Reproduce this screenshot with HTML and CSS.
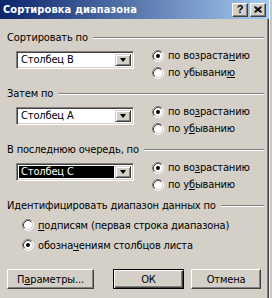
FILE: index.html
```html
<!DOCTYPE html>
<html>
<head>
<meta charset="utf-8">
<link rel="stylesheet" href="styles.css">
</head>
<body>
<div class="screen">
  <div class="dialog">
    <div class="titlebar">
      <span class="title">Сортировка диапазона</span>
      <div class="tbtns">
        <span class="tbtn help">?</span>
        <span class="tbtn close"><svg width="8" height="7" viewBox="0 0 8 7"><path d="M0.5 0.5 L7.5 6.5 M1.5 0.5 L7.5 5.5 M0.5 1.5 L6.5 6.5 M7.5 0.5 L0.5 6.5 M6.5 0.5 L0.5 5.5 M7.5 1.5 L1.5 6.5" stroke="#000" stroke-width="1" fill="none"/></svg></span>
      </div>
    </div>
    <div class="client">
      <section class="group">
        <div class="ghead"><span>Сортировать по</span><i class="rule"></i></div>
        <div class="gbody">
          <div class="combo"><span class="val">Столбец B</span><span class="drop"><i class="tri"></i></span></div>
          <div class="radios">
            <div class="radio"><svg class="rb on" width="12" height="12" viewBox="0 0 12 12"><circle cx="6" cy="6" r="5" fill="#fff"/><path d="M2.11 9.89A5.5 5.5 0 0 1 9.89 2.11" stroke="#808080" fill="none"/><path d="M9.89 2.11A5.5 5.5 0 0 1 2.11 9.89" stroke="#fff" fill="none"/><path d="M2.82 9.18A4.5 4.5 0 0 1 9.18 2.82" stroke="#404040" fill="none"/><path d="M9.18 2.82A4.5 4.5 0 0 1 2.82 9.18" stroke="#d4d0c8" fill="none"/><circle class="dot" cx="6" cy="6" r="2" fill="#000"/></svg><span>по возраста<u>н</u>ию</span></div>
            <div class="radio"><svg class="rb" width="12" height="12" viewBox="0 0 12 12"><circle cx="6" cy="6" r="5" fill="#fff"/><path d="M2.11 9.89A5.5 5.5 0 0 1 9.89 2.11" stroke="#808080" fill="none"/><path d="M9.89 2.11A5.5 5.5 0 0 1 2.11 9.89" stroke="#fff" fill="none"/><path d="M2.82 9.18A4.5 4.5 0 0 1 9.18 2.82" stroke="#404040" fill="none"/><path d="M9.18 2.82A4.5 4.5 0 0 1 2.82 9.18" stroke="#d4d0c8" fill="none"/></svg><span>по убывани<u>ю</u></span></div>
          </div>
        </div>
      </section>
      <section class="group">
        <div class="ghead"><span>Затем по</span><i class="rule"></i></div>
        <div class="gbody">
          <div class="combo"><span class="val">Столбец А</span><span class="drop"><i class="tri"></i></span></div>
          <div class="radios">
            <div class="radio"><svg class="rb on" width="12" height="12" viewBox="0 0 12 12"><circle cx="6" cy="6" r="5" fill="#fff"/><path d="M2.11 9.89A5.5 5.5 0 0 1 9.89 2.11" stroke="#808080" fill="none"/><path d="M9.89 2.11A5.5 5.5 0 0 1 2.11 9.89" stroke="#fff" fill="none"/><path d="M2.82 9.18A4.5 4.5 0 0 1 9.18 2.82" stroke="#404040" fill="none"/><path d="M9.18 2.82A4.5 4.5 0 0 1 2.82 9.18" stroke="#d4d0c8" fill="none"/><circle cx="6" cy="6" r="2" fill="#000"/></svg><span>по во<u>з</u>растанию</span></div>
            <div class="radio"><svg class="rb" width="12" height="12" viewBox="0 0 12 12"><circle cx="6" cy="6" r="5" fill="#fff"/><path d="M2.11 9.89A5.5 5.5 0 0 1 9.89 2.11" stroke="#808080" fill="none"/><path d="M9.89 2.11A5.5 5.5 0 0 1 2.11 9.89" stroke="#fff" fill="none"/><path d="M2.82 9.18A4.5 4.5 0 0 1 9.18 2.82" stroke="#404040" fill="none"/><path d="M9.18 2.82A4.5 4.5 0 0 1 2.82 9.18" stroke="#d4d0c8" fill="none"/></svg><span>по у<u>б</u>ыванию</span></div>
          </div>
        </div>
      </section>
      <section class="group">
        <div class="ghead"><span>В последнюю очередь, по</span><i class="rule"></i></div>
        <div class="gbody">
          <div class="combo focus"><span class="val">Столбец C</span><span class="drop"><i class="tri"></i></span></div>
          <div class="radios">
            <div class="radio"><svg class="rb on" width="12" height="12" viewBox="0 0 12 12"><circle cx="6" cy="6" r="5" fill="#fff"/><path d="M2.11 9.89A5.5 5.5 0 0 1 9.89 2.11" stroke="#808080" fill="none"/><path d="M9.89 2.11A5.5 5.5 0 0 1 2.11 9.89" stroke="#fff" fill="none"/><path d="M2.82 9.18A4.5 4.5 0 0 1 9.18 2.82" stroke="#404040" fill="none"/><path d="M9.18 2.82A4.5 4.5 0 0 1 2.82 9.18" stroke="#d4d0c8" fill="none"/><circle cx="6" cy="6" r="2" fill="#000"/></svg><span>по во<u>з</u>растанию</span></div>
            <div class="radio"><svg class="rb" width="12" height="12" viewBox="0 0 12 12"><circle cx="6" cy="6" r="5" fill="#fff"/><path d="M2.11 9.89A5.5 5.5 0 0 1 9.89 2.11" stroke="#808080" fill="none"/><path d="M9.89 2.11A5.5 5.5 0 0 1 2.11 9.89" stroke="#fff" fill="none"/><path d="M2.82 9.18A4.5 4.5 0 0 1 9.18 2.82" stroke="#404040" fill="none"/><path d="M9.18 2.82A4.5 4.5 0 0 1 2.82 9.18" stroke="#d4d0c8" fill="none"/></svg><span>по у<u>б</u>ыванию</span></div>
          </div>
        </div>
      </section>
      <section class="group ident">
        <div class="ghead"><span>Идентифицировать диапазон данных по</span><i class="rule"></i></div>
        <div class="iradios">
          <div class="radio"><svg class="rb" width="12" height="12" viewBox="0 0 12 12"><circle cx="6" cy="6" r="5" fill="#fff"/><path d="M2.11 9.89A5.5 5.5 0 0 1 9.89 2.11" stroke="#808080" fill="none"/><path d="M9.89 2.11A5.5 5.5 0 0 1 2.11 9.89" stroke="#fff" fill="none"/><path d="M2.82 9.18A4.5 4.5 0 0 1 9.18 2.82" stroke="#404040" fill="none"/><path d="M9.18 2.82A4.5 4.5 0 0 1 2.82 9.18" stroke="#d4d0c8" fill="none"/></svg><span><u>п</u>одписям (первая строка диапазона)</span></div>
          <div class="radio"><svg class="rb on" width="12" height="12" viewBox="0 0 12 12"><circle cx="6" cy="6" r="5" fill="#fff"/><path d="M2.11 9.89A5.5 5.5 0 0 1 9.89 2.11" stroke="#808080" fill="none"/><path d="M9.89 2.11A5.5 5.5 0 0 1 2.11 9.89" stroke="#fff" fill="none"/><path d="M2.82 9.18A4.5 4.5 0 0 1 9.18 2.82" stroke="#404040" fill="none"/><path d="M9.18 2.82A4.5 4.5 0 0 1 2.82 9.18" stroke="#d4d0c8" fill="none"/><circle cx="6" cy="6" r="2" fill="#000"/></svg><span>обозна<u>ч</u>ениям столбцов листа</span></div>
        </div>
      </section>
      <div class="buttons">
        <span class="btn params">П<u>а</u>раметры...</span>
        <span class="btn ok default">ОК</span>
        <span class="btn cancel">Отмена</span>
      </div>
    </div>
  </div>
  <div class="strip"></div>
</div>
</body>
</html>
```
FILE: styles.css
```css
* { box-sizing: border-box; }
html, body { margin: 0; padding: 0; }
body {
  width: 272px;
  height: 298px;
  overflow: hidden;
  background: #d4d0c8;
  font-family: "DejaVu Sans Condensed", "DejaVu Sans", sans-serif;
  font-size: 11px;
  letter-spacing: -0.15px;
  color: #000;
}
.screen { display: flex; height: 298px; }
.dialog { width: 269px; display: flex; flex-direction: column; }
.titlebar {
  height: 19px;
  background: linear-gradient(to right, #0a246a, #a6caf0);
  display: flex;
  align-items: center;
  padding: 0 3px 0 3px;
}
.title {
  flex: 1;
  color: #fff;
  font-weight: bold;
  font-size: 11px;
  letter-spacing: 0.1px;
  white-space: nowrap;
}
.tbtns { display: flex; gap: 2px; }
.tbtn {
  width: 16px;
  height: 14px;
  background: #d4d0c8;
  border: 1px solid;
  border-color: #fff #404040 #404040 #fff;
  box-shadow: inset -1px -1px #808080;
  display: flex;
  align-items: center;
  justify-content: center;
}
.help {
  font-family: "Liberation Sans", sans-serif;
  font-weight: bold;
  font-size: 11px;
  line-height: 1;
  letter-spacing: 0;
}
.client {
  flex: 1;
  padding-top: 12px;
  box-shadow: inset -1px 0 #404040, inset -2px 0 #808080;
}
.group { height: 56px; }
.ghead {
  display: flex;
  align-items: center;
  height: 13px;
  line-height: 13px;
  padding: 0 5px 0 7px;
  white-space: nowrap;
}
.rule {
  flex: 1;
  height: 2px;
  margin-left: 5px;
  border-top: 1px solid #808080;
  border-bottom: 1px solid #fff;
}
.gbody { display: flex; align-items: flex-start; padding-left: 16px; }
.combo {
  width: 118px;
  height: 18px;
  margin-top: 7px;
  background: #fff;
  border: 1px solid;
  border-color: #808080 #fff #fff #808080;
  box-shadow: inset 1px 1px #404040, inset -1px -1px #d4d0c8;
  display: flex;
  padding: 2px;
}
.val {
  flex: 1;
  padding-left: 2px;
  line-height: 12px;
  white-space: nowrap;
}
.focus .val { background: #000; color: #fff; margin-right: 1px; }
.drop {
  width: 16px;
  background: #d4d0c8;
  border: 1px solid;
  border-color: #d4d0c8 #404040 #404040 #d4d0c8;
  box-shadow: inset 1px 1px #fff, inset -1px -1px #808080;
  display: flex;
  align-items: center;
  justify-content: center;
}
.tri {
  width: 0;
  height: 0;
  border-left: 3.5px solid transparent;
  border-right: 3.5px solid transparent;
  border-top: 4px solid #000;
}
.radios { margin-left: 18px; margin-top: 3px; display: flex; flex-direction: column; }
.radio { display: flex; align-items: center; height: 17px; white-space: nowrap; }
.radio span { margin-left: 4px; }
.rb { flex: none; }
.iradios { display: flex; flex-direction: column; padding-left: 22px; margin-top: 3px; }
.iradios .radio { height: 20px; }
.buttons { display: flex; margin-top: 14px; padding-left: 7px; }
.btn {
  height: 20px;
  display: flex;
  align-items: center;
  justify-content: center;
  background: #d4d0c8;
  border: 1px solid;
  border-color: #fff #404040 #404040 #fff;
  box-shadow: inset -1px -1px #808080;
}
.params { width: 87px; }
.ok { width: 71px; margin-left: 19px; }
.cancel { width: 70px; margin-left: 7px; }
.default {
  border: 1px solid #000;
  box-shadow: inset 1px 1px #fff, inset -1px -1px #404040, inset -2px -2px #808080;
}
.strip {
  flex: 1;
  background: #c8c8c8;
  border-left: 1px solid #f4f4f4;
}
```
